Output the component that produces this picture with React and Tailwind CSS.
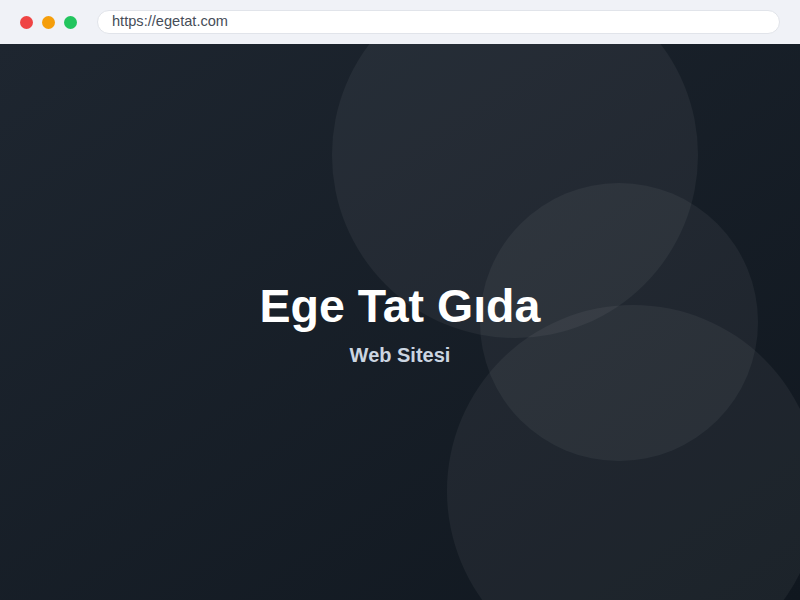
export default function App() {
  return (
    <div className="w-[800px] h-[600px] flex flex-col overflow-hidden" style={{ fontFamily: '"Liberation Sans", Arial, sans-serif' }}>
      <div className="h-[44px] shrink-0 bg-[#f0f2f7] flex items-center pl-[20px] pr-[20px]">
        <div className="flex items-center gap-[9px]">
          <span className="w-[13px] h-[13px] rounded-full bg-[#ef4444]" />
          <span className="w-[13px] h-[13px] rounded-full bg-[#f59e0b]" />
          <span className="w-[13px] h-[13px] rounded-full bg-[#22c55e]" />
        </div>
        <div className="ml-[20px] flex-1 h-[24px] rounded-full bg-white border border-[#e1e4ea] flex items-center px-[14px] text-[14.6px] text-[#464d58]">
          https://egetat.com
        </div>
      </div>

      <div className="relative flex-1 overflow-hidden bg-gradient-to-br from-[#1e2630] to-[#10171f] flex flex-col items-center justify-center pt-[8px]">
        <div className="absolute left-[332px] top-[-72px] w-[366px] h-[366px] rounded-full bg-white/5" />
        <div className="absolute left-[480px] top-[139px] w-[278px] h-[278px] rounded-full bg-white/5" />
        <div className="absolute left-[447px] top-[261px] w-[372px] h-[372px] rounded-full bg-white/5" />

        <h1 className="relative text-[46.5px] leading-none font-bold text-white">Ege Tat Gıda</h1>
        <p className="relative mt-[11px] text-[20px] leading-[28px] font-bold text-[#cbd5e1]">Web Sitesi</p>
      </div>
    </div>
  )
}
